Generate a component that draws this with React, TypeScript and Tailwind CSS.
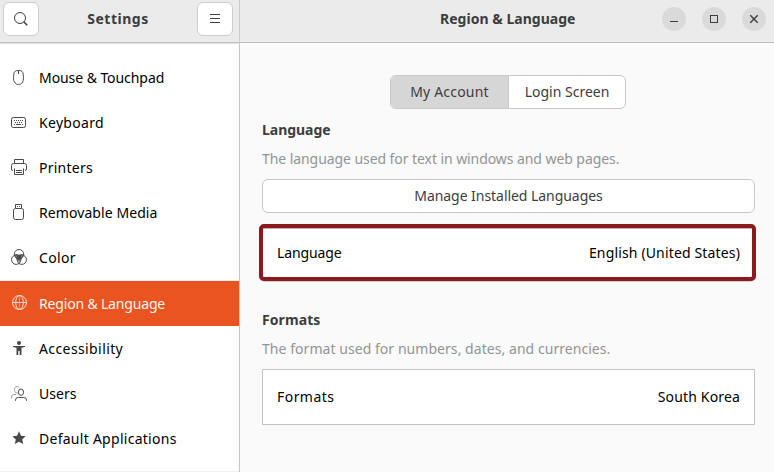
import type { ReactNode } from "react";

function Icon({ children }: { children: ReactNode }) {
  return (
    <svg width="16" height="16" viewBox="0 0 16 16" fill="none" stroke="currentColor" className="shrink-0">
      {children}
    </svg>
  );
}

const MouseIcon = (
  <Icon>
    <path d="M7.5 1.5C4.3 1.5 3.1 2.6 2.8 5.2C2.4 9 2.3 11 3.4 13C4.3 14.8 5.8 15.5 7.5 15.5S10.7 14.8 11.6 13C12.7 11 12.6 9 12.2 5.2C11.9 2.6 10.7 1.5 7.5 1.5ZM7.5 1.5V5" />
  </Icon>
);

const KeyboardIcon = (
  <Icon>
    <rect x="0.5" y="3.5" width="14" height="10" rx="1.8" />
    <path d="M3 6.5h1M5 6.5h1M7 6.5h1M9 6.5h1M11 6.5h1M4 8.5h1M6 8.5h1M8 8.5h1M10 8.5h1M3 10.5h1M5 10.5h5M11 10.5h1" />
  </Icon>
);

const PrinterIcon = (
  <Icon>
    <path d="M3.5 4.5V0.5H12.5V4.5M2 11.5Q0.5 11.5 0.5 10V6.5Q0.5 4.5 2.5 4.5H13.5Q15.5 4.5 15.5 6.5V10Q15.5 11.5 14 11.5M3.5 9.5V15.5H12.5V9.5M5 11.5H11M5 13.5H11" />
  </Icon>
);

const UsbIcon = (
  <Icon>
    <path d="M4.5 4V0.5H10.5V4M6 2.5H7M8 2.5H9" />
    <rect x="2.5" y="4.5" width="10" height="11" rx="2" />
  </Icon>
);

const ColorIcon = (
  <Icon>
    <path d="M8 5.6Q10.5 4.6 12.5 5.7Q12.2 8.5 10.7 10Q9.5 12 8 13.2Q6.5 12 5.3 10Q3.8 8.5 3.5 5.7Q5.5 4.6 8 5.6Z" fill="currentColor" fillOpacity="0.7" stroke="none" />
    <path d="M8 6.2L10.4 7.2L10 9.5L8 11.3L6 9.5L5.6 7.2Z" fill="currentColor" stroke="none" />
    <circle cx="8" cy="5.2" r="4.7" />
    <circle cx="5.2" cy="10.7" r="4.7" />
    <circle cx="10.8" cy="10.7" r="4.7" />
  </Icon>
);

const GlobeIcon = (
  <Icon>
    <circle cx="8.5" cy="7.5" r="7" />
    <ellipse cx="8.5" cy="7.5" rx="3.8" ry="7" />
    <path d="M1.5 7.5H15.5" />
    <path d="M8.5 0.5V14.5" strokeOpacity="0.4" />
  </Icon>
);

const AccessibilityIcon = (
  <Icon>
    <circle cx="8" cy="3" r="2.1" fill="currentColor" stroke="none" />
    <path d="M2 6H14V7L10.5 7.8V15H8.7V11H7.3V15H5.5V7.8L2 7Z" fill="currentColor" stroke="none" />
  </Icon>
);

const UsersIcon = (
  <Icon>
    <g strokeOpacity="0.5">
      <path d="M8 7.6Q6.6 8.4 5 7.8C3.2 6.9 2.9 4 3.9 2.5C4.9 1 7.4 1 8.6 2.9" />
      <path d="M0.5 13.5V12Q0.5 9.5 3 9.5H5" />
    </g>
    <ellipse cx="10" cy="7.2" rx="2.6" ry="3.2" />
    <path d="M4.5 15.8V15Q4.5 12.5 7.3 12.5H12.7Q15.5 12.5 15.5 15V15.8" />
  </Icon>
);

const StarIcon = (
  <Icon>
    <path d="M8 1.2L10 5.7L14.6 6.2L11.2 9.4L12.2 14.1L8 11.7L3.8 14.1L4.8 9.4L1.4 6.2L6 5.7Z" fill="currentColor" stroke="none" />
  </Icon>
);

const categories = [
  { label: "Mouse & Touchpad", tracking: "tracking-[-0.07px]", icon: MouseIcon },
  { label: "Keyboard", tracking: "tracking-[0.3px]", icon: KeyboardIcon },
  { label: "Printers", tracking: "tracking-[0.25px]", icon: PrinterIcon },
  { label: "Removable Media", tracking: "tracking-[0.08px]", icon: UsbIcon },
  { label: "Color", tracking: "tracking-[0.36px]", icon: ColorIcon },
  { label: "Region & Language", tracking: "tracking-[-0.17px]", icon: GlobeIcon, active: true },
  { label: "Accessibility", tracking: "tracking-[0.4px]", icon: AccessibilityIcon },
  { label: "Users", tracking: "tracking-[0.05px]", icon: UsersIcon },
  { label: "Default Applications", tracking: "tracking-[0.27px]", icon: StarIcon },
];

function Sidebar() {
  return (
    <aside className="flex w-60 shrink-0 flex-col border-r border-[#c4c4c4] bg-white">
      <header className="flex h-[43px] shrink-0 items-start justify-between border-b border-[#bfbfbf] bg-[#ebebeb] pl-[3px] pr-[6px] pt-[2px] shadow-[0_1px_1px_#e4e4e4]">
        <button className="flex h-[34px] w-9 items-center justify-center rounded-[6px] border border-[#cdcdcd] bg-white text-[#3d3d3d]">
          <Icon>
            <circle cx="7" cy="7" r="5.5" />
            <path d="M10.8 10.8L14.2 14.2" strokeWidth="1.6" />
          </Icon>
        </button>
        <h1 className="pt-[6px] font-bold tracking-[0.5px]">Settings</h1>
        <button className="flex h-[34px] w-9 items-center justify-center rounded-[6px] border border-[#cdcdcd] bg-white text-[#3d3d3d]">
          <Icon>
            <path d="M3 3.5H13M3 7.5H13M3 11.5H13" />
          </Icon>
        </button>
      </header>
      <nav className="flex flex-col border-b border-[#f0f0f0] pb-[10px] pt-3">
        {categories.map(({ label, tracking, icon, active }) => (
          <div
            key={label}
            className={
              active
                ? "flex h-[46px] items-start gap-[12px] border-t border-[#eeeeee] bg-[#e95420] bg-clip-padding pl-[11px] pt-[14px] text-[#ffd9cc]"
                : "flex h-[45px] items-start gap-[12px] pl-[11px] pt-[14px] text-[#4a4a4a]"
            }
          >
            {icon}
            <span className={`-mt-[2px] whitespace-nowrap ${tracking} ${active ? "text-[#fff4ef]" : "text-black"}`}>{label}</span>
          </div>
        ))}
      </nav>
    </aside>
  );
}

function WindowButton({ children }: { children: ReactNode }) {
  return (
    <button className="flex size-6 items-center justify-center rounded-full bg-[#dadada] text-[#3d3d3d]">
      <Icon>{children}</Icon>
    </button>
  );
}

function Content() {
  return (
    <main className="flex flex-1 flex-col bg-[#fafafa]">
      <header className="flex h-[43px] shrink-0 items-start border-b border-[#bfbfbf] bg-[#ebebeb] pr-2 pt-[7px]">
        <h2 className="ml-[200px] flex-1 whitespace-nowrap pt-[1px] font-bold tracking-[0.02px]">Region &amp; Language</h2>
        <div className="flex gap-4">
          <WindowButton>
            <path d="M4 10.5H12" />
          </WindowButton>
          <WindowButton>
            <rect x="4.5" y="4.5" width="7" height="7" />
          </WindowButton>
          <WindowButton>
            <path d="M4.3 4.3L11.7 11.7M11.7 4.3L4.3 11.7" strokeWidth="1.4" />
          </WindowButton>
        </div>
      </header>

      <div className="flex flex-col pl-[22px] pr-[19px] pt-8">
        <div className="ml-32 flex h-[34px] w-[236px] overflow-hidden rounded-[6px] border border-[#c8c8c8] bg-white">
          <button className="flex w-[118px] items-center justify-center border-r border-[#c8c8c8] bg-[#d6d6d6] pb-[2px] tracking-[0.2px]">My Account</button>
          <button className="flex flex-1 items-center justify-center pb-[2px]">Login Screen</button>
        </div>

        <h3 className="mt-[10px] font-bold tracking-[-0.04px]">Language</h3>
        <p className="mt-2 whitespace-nowrap tracking-[-0.07px] text-[#929595]">The language used for text in windows and web pages.</p>
        <button className="mt-[10px] flex h-[34px] items-center justify-center rounded-[6px] border border-[#c8c8c8] bg-white pb-[2px] tracking-[-0.05px]">
          Manage Installed Languages
        </button>
        <div className="-ml-[3px] -mr-[1px] mt-[11px] flex h-[57px] items-center justify-between rounded-[5px] border-4 border-[#8b1a1c] bg-white pl-[14px] pr-3 text-black shadow-[0_0.5px_0_#aaa,inset_0_1px_0_#c4b4b4]">
          <span className="tracking-[-0.1px]">Language</span>
          <span className="tracking-[0.15px]">English (United States)</span>
        </div>

        <h3 className="mt-7 font-bold tracking-[0.08px]">Formats</h3>
        <p className="mt-2 whitespace-nowrap tracking-[0.05px] text-[#929595]">The format used for numbers, dates, and currencies.</p>
        <div className="mt-[10px] flex h-14 items-center justify-between border border-[#c4c4c4] bg-white px-[14px] pb-[2px] text-black">
          <span className="tracking-[0.45px]">Formats</span>
          <span className="tracking-[0.16px]">South Korea</span>
        </div>
      </div>
    </main>
  );
}

export default function App() {
  return (
    <div className="flex h-[472px] w-[774px] overflow-hidden bg-[#fafafa] font-['Noto_Sans',sans-serif] text-[14px] leading-[21px] text-[#3d3d3d]">
      <Sidebar />
      <Content />
    </div>
  );
}
